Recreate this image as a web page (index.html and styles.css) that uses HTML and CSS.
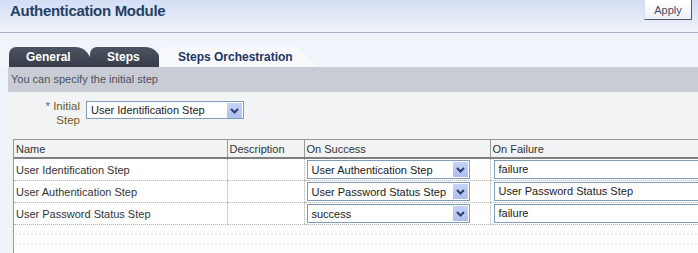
FILE: index.html
```html
<!DOCTYPE html>
<html>
<head>
<meta charset="utf-8">
<link rel="stylesheet" href="styles.css">
</head>
<body>
<div class="page">
  <header class="page-header">
    <h1 class="title">Authentication Module</h1>
    <button class="btn">Apply</button>
  </header>
  <nav class="tabs">
    <div class="tab tab-dark tab-general">General</div>
    <div class="tab tab-dark tab-steps">Steps</div>
    <div class="tab tab-active">Steps Orchestration</div>
  </nav>
  <div class="info">You can specify the initial step</div>
  <div class="content">
    <div class="form-row">
      <div class="label"><span class="req">*</span> Initial<br>Step</div>
      <div class="select select-initial">
        <span class="select-text">User Identification Step</span>
        <span class="arrow"><svg width="15" height="15" viewBox="0 0 15 15"><path d="M4 6 L7.5 9.5 L11 6" fill="none" stroke="#2b3f6e" stroke-width="2"/></svg></span>
      </div>
    </div>
    <div class="table-wrap">
      <table class="grid">
        <colgroup>
          <col class="c-name"><col class="c-desc"><col class="c-succ"><col class="c-fail">
        </colgroup>
        <thead>
          <tr><th>Name</th><th>Description</th><th>On Success</th><th>On Failure</th></tr>
        </thead>
        <tbody>
          <tr>
            <td>User Identification Step</td><td></td>
            <td><div class="select select-row"><span class="select-text">User Authentication Step</span><span class="arrow"><svg width="15" height="15" viewBox="0 0 15 15"><path d="M4 6 L7.5 9.5 L11 6" fill="none" stroke="#2b3f6e" stroke-width="2"/></svg></span></div></td>
            <td><div class="input">failure</div></td>
          </tr>
          <tr>
            <td>User Authentication Step</td><td></td>
            <td><div class="select select-row"><span class="select-text">User Password Status Step</span><span class="arrow"><svg width="15" height="15" viewBox="0 0 15 15"><path d="M4 6 L7.5 9.5 L11 6" fill="none" stroke="#2b3f6e" stroke-width="2"/></svg></span></div></td>
            <td><div class="input">User Password Status Step</div></td>
          </tr>
          <tr>
            <td>User Password Status Step</td><td></td>
            <td><div class="select select-row"><span class="select-text">success</span><span class="arrow"><svg width="15" height="15" viewBox="0 0 15 15"><path d="M4 6 L7.5 9.5 L11 6" fill="none" stroke="#2b3f6e" stroke-width="2"/></svg></span></div></td>
            <td><div class="input">failure</div></td>
          </tr>
        </tbody>
      </table>
      <div class="empty-area"></div>
    </div>
  </div>
</div>
</body>
</html>
```

FILE: styles.css
```css
html, body {
  margin: 0;
  padding: 0;
  width: 698px;
  height: 253px;
  overflow: hidden;
}
body {
  font-family: "Liberation Sans", Arial, sans-serif;
  font-size: 11px;
  color: #333;
  background: #eef2fa;
}
.page {
  display: flex;
  flex-direction: column;
  height: 253px;
}
.page-header {
  height: 32px;
  border-bottom: 1px solid #a3afc2;
  background: linear-gradient(#d3def5, #e4ebf8 60%, #eef2fa);
  display: flex;
  justify-content: space-between;
  align-items: flex-start;
  flex: none;
}
.title {
  margin: 2px 0 0 10px;
  font-size: 15px;
  letter-spacing: -0.3px;
  font-weight: bold;
  color: #263f63;
  line-height: 18px;
}
.btn {
  margin: 0 6px 0 0;
  width: 48px;
  height: 20px;
  padding: 0;
  font-family: "Liberation Sans", Arial, sans-serif;
  font-size: 11px;
  color: #3f4b66;
  background: linear-gradient(#ffffff, #eef1f7);
  border: 1px solid #d6dbe6;
  border-right-color: #555a66;
  border-bottom-color: #555a66;
  border-top: none;
}
.tabs {
  display: flex;
  padding: 14px 0 0 9px;
  height: 20px;
  background: #f1f4fa;
  flex: none;
}
.tab {
  height: 20px;
  line-height: 21px;
  font-size: 12px;
  font-weight: bold;
  box-sizing: border-box;
}
.tab-dark {
  color: #fff;
  background: linear-gradient(#4d5463, #363c48);
  border-top-left-radius: 7px;
  border-top-right-radius: 16px 20px;
}
.tab-general {
  width: 83px;
  padding-left: 17px;
}
.tab-steps {
  width: 72px;
  padding-left: 17px;
  margin-left: -2px;
}
.tab-active {
  width: 160px;
  margin-left: -3px;
  padding-left: 19px;
  color: #1d3563;
  background: #f8f9fc;
  border-top-left-radius: 6px;
  clip-path: polygon(0 0, calc(100% - 22px) 0, 100% 100%, 0 100%);
}
.info {
  margin-left: 8px;
  height: 25px;
  box-sizing: border-box;
  padding: 6px 0 0 3px;
  line-height: 13px;
  color: #4e5058;
  background: #c9ccd4;
  flex: none;
}
.content {
  margin-left: 8px;
  flex: 1;
  background: #f2f3f5;
  display: flex;
  flex-direction: column;
}
.form-row {
  display: flex;
  align-items: flex-start;
  padding: 7px 0 0 0;
  height: 40px;
  flex: none;
}
.label {
  width: 72px;
  text-align: right;
  line-height: 14px;
  color: #6e5b24;
  font-size: 11.5px;
}
.req {
  color: #4a6a9a;
}
.select {
  display: flex;
  align-items: center;
  box-sizing: border-box;
  border: 1px solid #7f9db9;
  background: #fff;
  color: #222;
}
.select-initial {
  margin: 2px 0 0 6px;
  width: 158px;
  height: 18px;
}
.select-text {
  flex: 1;
  padding-left: 4px;
  white-space: nowrap;
  overflow: hidden;
}
.arrow {
  width: 15px;
  height: 15px;
  margin-right: 1px;
  background: linear-gradient(#c4d3f6, #aebff0);
  display: flex;
}
.table-wrap {
  margin-left: 5px;
  flex: 1;
  min-width: 0;
  overflow: hidden;
  border-left: 1px solid #9a9a9a;
  display: flex;
  flex-direction: column;
}
.grid {
  border-collapse: collapse;
  table-layout: fixed;
  width: 690px;
}
.c-name { width: 213px; }
.c-desc { width: 77px; }
.c-succ { width: 186px; }
.c-fail { width: 214px; }
.grid th {
  text-align: left;
  font-weight: normal;
  color: #333;
  height: 17px;
  padding: 0 0 0 2px;
  border-top: 1px solid #9a9a9a;
  border-left: 1px solid #9a9a9a;
  border-bottom: 2px solid #808080;
  background: #f2f3f5;
  line-height: 16px;
}
.grid th:first-child { border-left: none; }
.grid td {
  height: 21px;
  padding: 0 0 0 2px;
  background: #fff;
  color: #333;
  border-left: 1px dotted #b5b5b5;
  border-bottom: 1px dotted #b5b5b5;
  white-space: nowrap;
  overflow: hidden;
}
.grid td:first-child { border-left: none; }
.select-row {
  width: 163px;
  height: 19px;
}
.input {
  margin-left: 1px;
  width: 240px;
  height: 19px;
  box-sizing: border-box;
  border: 1px solid #7f9db9;
  padding-left: 4px;
  line-height: 17px;
  color: #222;
  background: #fff;
}
.empty-area {
  flex: 1;
  background-color: #fdfdfd;
  background-image: radial-gradient(circle, #dedede 0.6px, transparent 0.8px);
  background-size: 4px 10px;
  background-position: 0 4px;
}
```
